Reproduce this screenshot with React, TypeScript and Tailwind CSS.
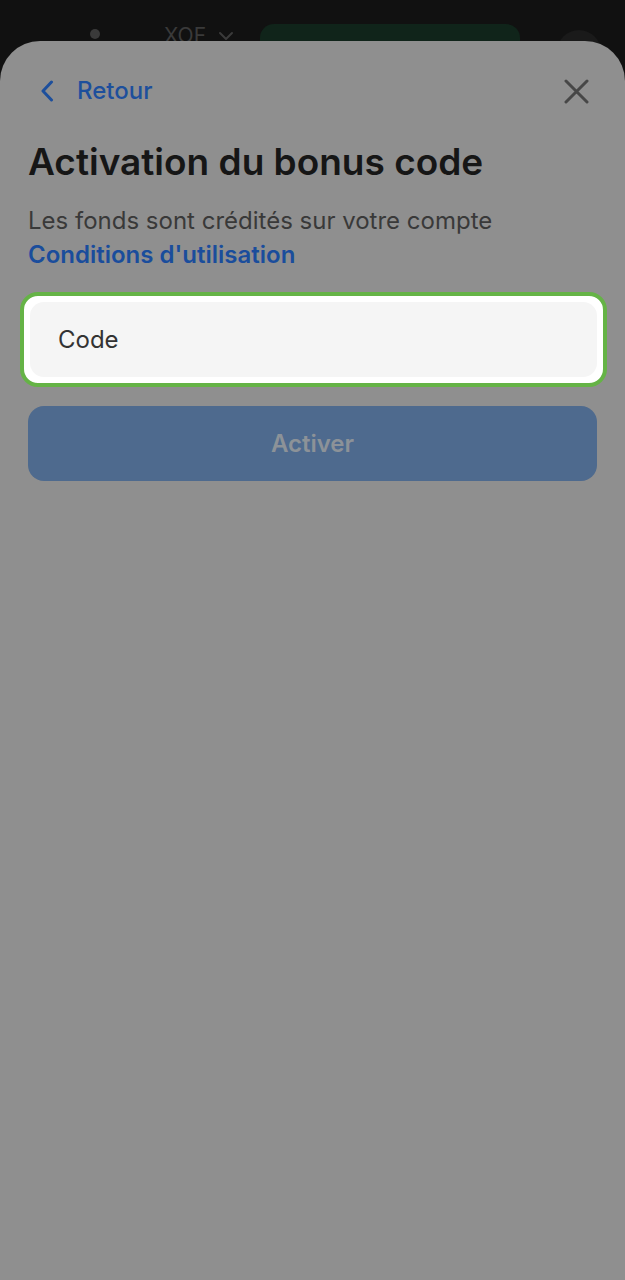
import { ChevronDown } from 'lucide-react'

export default function App() {
  return (
    <div className="relative h-[1280px] w-full overflow-hidden bg-[#111111] font-['Inter',sans-serif]">
      {/* header de la page derrière le sheet */}
      <div className="flex h-[68px] items-start px-[24px]">
        <span className="ml-[66px] mt-[29px] h-[10px] w-[10px] rounded-full bg-[#3a3a3a]" />
        <div className="ml-[64px] mt-[20px] flex items-center gap-[8px] text-[21px] text-[#3a3a3a]">
          XOF <ChevronDown size={24} strokeWidth={2} />
        </div>
        <div className="ml-[22px] mt-[24px] h-[44px] w-[260px] rounded-[14px] bg-[#10241a]" />
        <div className="ml-auto mt-[30px] h-[44px] w-[44px] rounded-full bg-[#1a1a1a]" />
      </div>

      {/* sheet */}
      <div className="absolute inset-x-0 top-[41px] bottom-0 rounded-t-[40px] bg-[#8f8f8f] px-[28px]">
        <div className="mt-[28px] flex h-[44px] items-center">
          <button className="flex items-center text-[24px] font-medium text-[#1d4f9c]">
            <svg width="14" height="22" viewBox="0 0 14 22" fill="none" className="ml-[12px]">
              <path d="M11.5 2 L3 11 L11.5 20" stroke="currentColor" strokeWidth="3" strokeLinecap="round" strokeLinejoin="round" />
            </svg>
            <span className="ml-[23px]">Retour</span>
          </button>
          <button className="ml-auto mr-[8px] text-[#474747]">
            <svg width="25" height="25" viewBox="0 0 25 25" fill="none">
              <path d="M2 2 L23 23 M23 2 L2 23" stroke="currentColor" strokeWidth="3" strokeLinecap="round" />
            </svg>
          </button>
        </div>

        <h1 className="mt-[27px] text-[37px] font-semibold leading-[44px] text-[#161616]">
          Activation du bonus code
        </h1>

        <p className="mt-[20px] text-[24px] leading-[34px] text-[#393939]">
          Les fonds sont crédités sur votre compte
        </p>
        <a className="block text-[24px] font-semibold leading-[34px] text-[#1a4d9c]">
          Conditions d'utilisation
        </a>

        <div className="-ml-[8px] -mr-[10px] mt-[20px] rounded-[18px] border-[4px] border-[#65b346] bg-white p-[6px]">
          <div className="flex h-[75px] items-center rounded-[14px] bg-[#f5f5f5] px-[28px] text-[24px] text-[#333333]">
            Code
          </div>
        </div>

        <button className="mt-[19px] flex h-[75px] w-full items-center justify-center rounded-[16px] bg-[#4e6a8e] text-[24px] font-semibold text-[#8c9298]">
          Activer
        </button>
      </div>
    </div>
  )
}
